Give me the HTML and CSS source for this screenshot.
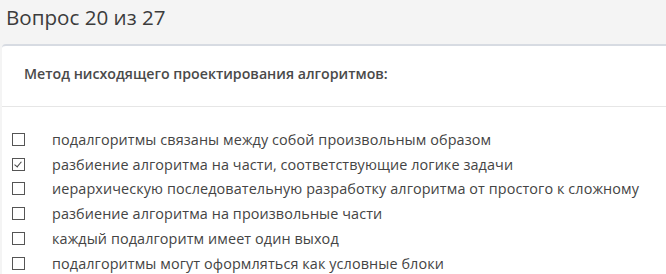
FILE: index.html
```html
<!DOCTYPE html>
<html>
<head>
  <meta charset="utf-8">
  <title>Вопрос 20 из 27</title>
  <link rel="stylesheet" href="styles.css">
</head>
<body>
  <!-- Question title -->
  <h1 class="title">Вопрос 20 из 27</h1>

  <!-- Question card -->
  <div class="card">
    <div class="card-header">Метод нисходящего проектирования алгоритмов:</div>
    <ul class="options">
      <li class="option"><span class="box"></span>подалгоритмы связаны между собой произвольным образом</li>
      <li class="option"><span class="box checked"></span>разбиение алгоритма на части, соответствующие логике задачи</li>
      <li class="option"><span class="box"></span>иерархическую последовательную разработку алгоритма от простого к сложному</li>
      <li class="option"><span class="box"></span>разбиение алгоритма на произвольные части</li>
      <li class="option"><span class="box"></span>каждый подалгоритм имеет один выход</li>
      <li class="option"><span class="box"></span>подалгоритмы могут оформляться как условные блоки</li>
    </ul>
  </div>
</body>
</html>
```

FILE: styles.css
```css
body {
  margin: 0;
  padding: 0;
  background-color: #f4f4f4;
  color: #333333;
  font-family: "Open Sans", "Liberation Sans", sans-serif;
  overflow: hidden;
}
.title {
  margin: 0;
  height: 44px;
  padding-left: 6px;
  font-size: 20.6px;
  font-weight: 400;
  line-height: 34px;
  color: #3c3c3c;
}
.card {
  margin-left: 2px;
  background-color: #ffffff;
  border-top: 2px solid #d7dbe2;
  border-radius: 4px 0 0 0;
  min-height: 240px;
}
.card-header {
  height: 60px;
  padding-left: 22px;
  line-height: 55px;
  font-size: 14.2px;
  font-weight: 600;
  color: #4a4a4a;
  border-bottom: 1px solid #e6e6e6;
}
.options {
  list-style: none;
  margin: 0;
  padding: 20px 0 0 0;
}
.option {
  display: flex;
  align-items: center;
  height: 24.8px;
  font-size: 14.4px;
  letter-spacing: 0.1px;
  white-space: nowrap;
  color: #444444;
}
.box {
  flex: none;
  position: relative;
  width: 11px;
  height: 11px;
  margin: 0 27px 0 10px;
  border: 1px solid #555555;
}
.box.checked::after {
  content: "";
  position: absolute;
  left: 3px;
  top: 1px;
  width: 3px;
  height: 6px;
  border-right: 1px solid #444;
  border-bottom: 1px solid #444;
  transform: rotate(40deg);
}
```
